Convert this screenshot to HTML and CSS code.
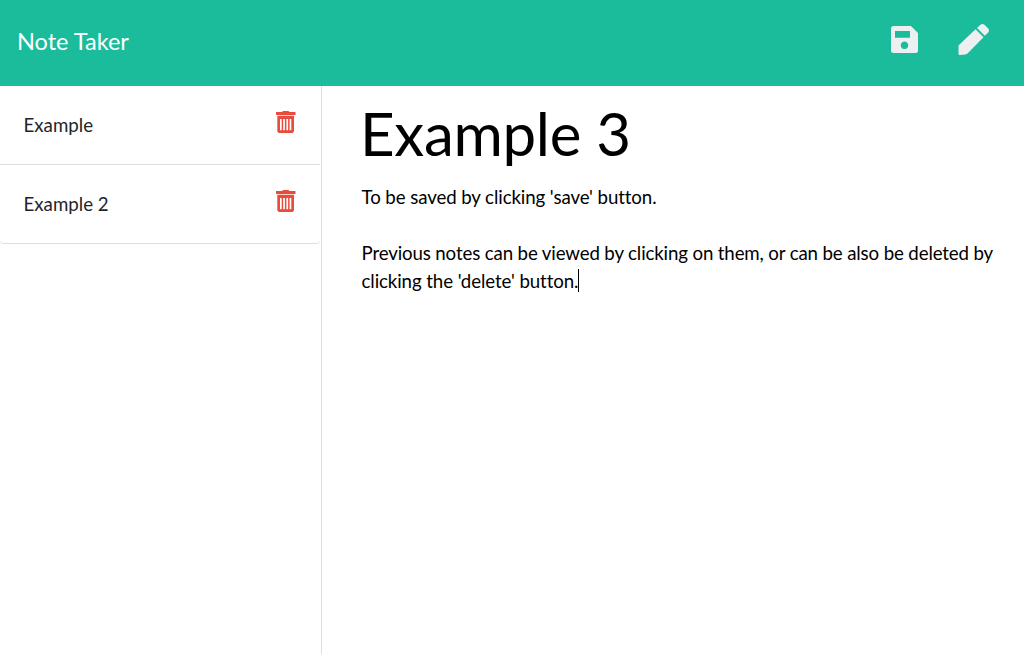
FILE: index.html
```html
<!DOCTYPE html>
<html lang="en">
<head>
<meta charset="utf-8">
<title>Note Taker</title>
<link rel="stylesheet" href="styles.css">
</head>
<body>
<header class="navbar">
  <a class="brand">Note Taker</a>
  <div class="actions">
    <svg class="save" viewBox="0 0 27 27"><path fill-rule="evenodd" d="M2.500 0H20l7 7v17.500a2.500 2.500 0 0 1-2.500 2.500h-22A2.500 2.500 0 0 1 0 24.500v-22A2.500 2.500 0 0 1 2.500 0zM4 5h15v6.700H4zM13.500 15.500a3.800 3.800 0 1 0 .01 0z"/></svg>
    <svg class="pen" viewBox="0 0 31 31"><path d="M.5 21.500 17.500 5.300l8 8L9.500 29.500 7.500 30.500 1.500 31Q.5 31 .5 30zM19 4l3.500-3.200q2-1.500 4 0l3.700 3.700q1.600 2 0 4L26.800 11.800z"/></svg>
  </div>
</header>
<main class="layout">
  <ul class="notes">
    <li class="note"><span>Example</span><svg class="trash" viewBox="0 0 20 23"><path fill-rule="evenodd" d="M0 1h6l1-1h5.500L13.500 1h6v3H0zM1.300 4.800H18V20.500L16.500 22H2.800L1.300 20.500zM4 8v11.300H5.700V8zM7.200 8v11.300H8.900V8zM10.400 8v11.300H12.100V8zM13.600 8v11.300H15.300V8z"/></svg></li>
    <li class="note"><span>Example 2</span><svg class="trash" viewBox="0 0 20 23"><path fill-rule="evenodd" d="M0 1h6l1-1h5.500L13.500 1h6v3H0zM1.300 4.800H18V20.500L16.500 22H2.800L1.300 20.500zM4 8v11.300H5.700V8zM7.200 8v11.300H8.900V8zM10.400 8v11.300H12.100V8zM13.600 8v11.300H15.300V8z"/></svg></li>
  </ul>
  <article class="editor">
    <h1 class="title">Example 3</h1>
    <p class="text">To be saved by clicking 'save' button.</p>
    <p class="text"><span class="long">Previous notes can be viewed by clicking on them, or can be also be deleted by</span><br>clicking the 'delete' button.<span class="caret"></span></p>
  </article>
</main>
</body>
</html>
```
FILE: styles.css
```css
* { box-sizing: border-box; }
body { margin: 0; height: 654px; display: flex; flex-direction: column; overflow: hidden; background: #fff; color: #212529; font-family: Lato, sans-serif; font-size: 18.7px; line-height: 28px; }
.navbar { height: 86px; flex: none; display: flex; align-items: flex-start; justify-content: space-between; padding: 24px 35px 0 17px; background: #1abc9c; color: #fff; }
.brand { font-size: 23.5px; line-height: 35px; }
.actions { display: flex; gap: 40px; fill: #ecf0f1; }
.save { width: 27px; height: 27px; margin-top: 2px; }
.pen { width: 31px; height: 31px; }
.layout { flex: 1; display: flex; }
.notes { width: 322px; flex: none; margin: 0; padding: 0 1px 0 0; border-right: 1px solid #dfdfdf; list-style: none; }
.note { height: 79px; display: flex; justify-content: space-between; align-items: flex-start; padding: 25px 24px 0 23.5px; border-bottom: 1px solid #dfdfdf; }
.note:last-child { border-radius: 0 0 4px 4px; }
.trash { width: 20px; height: 23px; fill: #e74c3c; }
.editor { flex: 1; padding: 12px 20px 0 39.5px; color: #000; }
.title { margin: 0 0 15px; font-size: 60px; line-height: 70px; font-weight: 400; letter-spacing: -0.3px; text-indent: -1.5px; }
.text { margin: 0 0 28px; white-space: nowrap; letter-spacing: -0.1px; }
.long { letter-spacing: -0.145px; }
.caret { display: inline-block; width: 1px; height: 23px; background: #000; vertical-align: -4px; }
```
